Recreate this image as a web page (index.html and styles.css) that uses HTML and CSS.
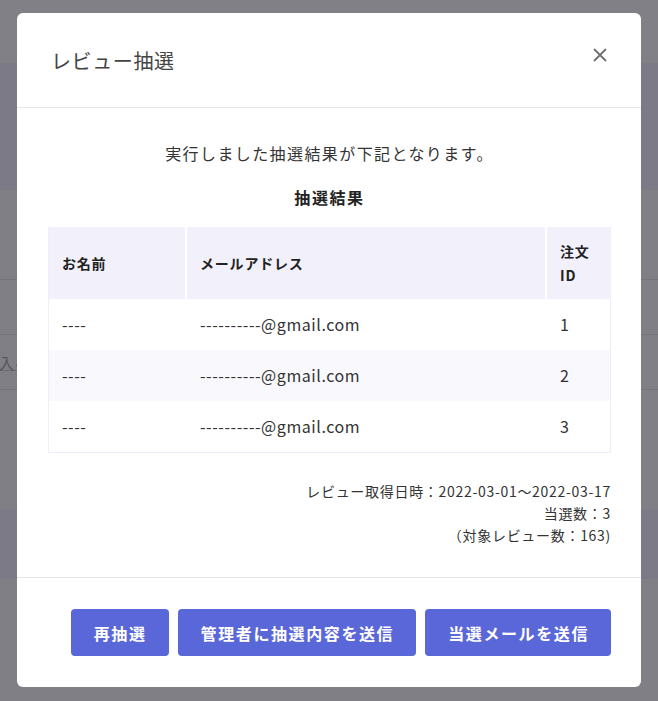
FILE: index.html
```html
<!DOCTYPE html>
<html lang="ja">
<head>
<meta charset="utf-8">
<title>レビュー抽選</title>
<link rel="stylesheet" href="styles.css">
</head>
<body>
<div class="backdrop">
  <div class="band band-top"></div>
  <div class="band band-blue"></div>
  <div class="band band-a"></div>
  <div class="band band-b"></div>
  <div class="band band-c"><span class="bg-link">入る</span></div>
  <div class="band band-d"></div>
  <div class="band band-blue2"></div>
  <div class="band band-e"></div>
</div>

<div class="modal">
  <header class="modal-header">
    <h2 class="modal-title">レビュー抽選</h2>
    <button class="close" aria-label="閉じる">
      <svg width="14" height="14" viewBox="0 0 14 14"><path d="M1 1L13 13M13 1L1 13" stroke="#707070" stroke-width="1.8" fill="none"/></svg>
    </button>
  </header>
  <div class="modal-body">
    <p class="lead">実行しました抽選結果が下記となります。</p>
    <h3 class="result-title">抽選結果</h3>
    <table class="result">
      <thead>
        <tr>
          <th class="c-name">お名前</th>
          <th class="c-mail">メールアドレス</th>
          <th class="c-id">注文ID</th>
        </tr>
      </thead>
      <tbody>
        <tr><td>----</td><td>----------@gmail.com</td><td>1</td></tr>
        <tr class="alt"><td>----</td><td>----------@gmail.com</td><td>2</td></tr>
        <tr><td>----</td><td>----------@gmail.com</td><td>3</td></tr>
      </tbody>
    </table>
    <div class="info">
      <div>レビュー取得日時：2022-03-01～2022-03-17</div>
      <div>当選数：3</div>
      <div>（対象レビュー数：163)</div>
    </div>
  </div>
  <footer class="modal-footer">
    <button class="btn">再抽選</button>
    <button class="btn">管理者に抽選内容を送信</button>
    <button class="btn">当選メールを送信</button>
  </footer>
</div>
</body>
</html>
```
FILE: styles.css
```css
* { box-sizing: border-box; }
html, body {
  margin: 0;
  padding: 0;
  height: 100%;
}
body {
  background: #7f7f85;
  font-family: "Noto Sans CJK JP", "Noto Sans", sans-serif;
  color: #333;
  overflow: hidden;
  position: relative;
}

/* dimmed page behind the modal */
.backdrop { width: 100%; }
.band { width: 100%; }
.band-top { height: 63px; background: #818087; }
.band-blue { height: 127px; background: #7b7a86; }
.band-a { height: 90px; background: #807f85; border-bottom: 1px solid #74737a; }
.band-b { height: 55px; background: #807f85; border-bottom: 1px solid #74737a; }
.band-c {
  height: 55px;
  background: #807f85;
  border-bottom: 1px solid #74737a;
  display: flex;
  align-items: center;
}
.bg-link {
  margin-left: -1px;
  font-size: 15px;
  color: #55555c;
  text-decoration: underline;
  text-decoration-color: #6a6a70;
}
.band-d { height: 119px; background: #807f85; }
.band-blue2 { height: 70px; background: #7b7a86; }
.band-e { height: 119px; background: #807f85; }

/* modal */
.modal {
  position: absolute;
  top: 13px;
  left: 17px;
  width: 624px;
  background: #fff;
  border-radius: 6px;
  letter-spacing: 0.05em;
}
.modal-header {
  height: 95px;
  padding: 0 34px;
  border-bottom: 1px solid #e6e6e9;
  display: flex;
  align-items: center;
  justify-content: space-between;
}
.modal-title {
  margin: 0;
  font-size: 20px;
  font-weight: 400;
  color: #444;
  letter-spacing: 0.03em;
}
.close {
  border: 0;
  background: none;
  padding: 0;
  width: 14px;
  height: 14px;
  margin-bottom: 10px;
  display: flex;
}

.modal-body {
  padding: 32px 30px 31px 31px;
}
.lead {
  margin: 0;
  text-align: center;
  font-size: 16px;
  line-height: 27px;
  color: #333;
  letter-spacing: 0.088em;
}
.result-title {
  margin: 17px 0 16px;
  text-align: center;
  font-size: 16px;
  line-height: 27px;
  font-weight: 700;
  color: #222;
  letter-spacing: 0.1em;
}

.result {
  width: 563px;
  table-layout: fixed;
  border-collapse: separate;
  border-spacing: 0;
  border: 1px solid #efeef8;
  border-top: 0;
}
.result th {
  background: #f2f1fb;
  font-size: 14px;
  font-weight: 700;
  color: #222;
  text-align: left;
  line-height: 24px;
  padding: 12px 13px;
  height: 71px;
  border-right: 2px solid #fff;
}
.result th.c-id { border-right: 0; }
.c-name { width: 138px; }
.c-mail { width: 360px; }
.c-id { width: 63px; }
.result td {
  font-size: 16px;
  line-height: 27px;
  padding: 12px 13px;
  color: #333;
  letter-spacing: 0.035em;
}
.result tr.alt td { background: #f9f9fd; }

.info {
  margin-top: 27px;
  text-align: right;
  font-size: 14px;
  line-height: 22px;
  color: #333;
  letter-spacing: 0.05em;
}

.modal-footer {
  border-top: 1px solid #e6e6e9;
  padding: 31px 30px 31px;
  display: flex;
  justify-content: flex-end;
  gap: 9px;
}
.btn {
  height: 47px;
  padding: 0 22px 0 23px;
  border: 0;
  border-radius: 4px;
  background: #5a67d8;
  color: #fff;
  font-family: inherit;
  font-size: 16px;
  font-weight: 700;
  letter-spacing: 0.1em;
}
```
